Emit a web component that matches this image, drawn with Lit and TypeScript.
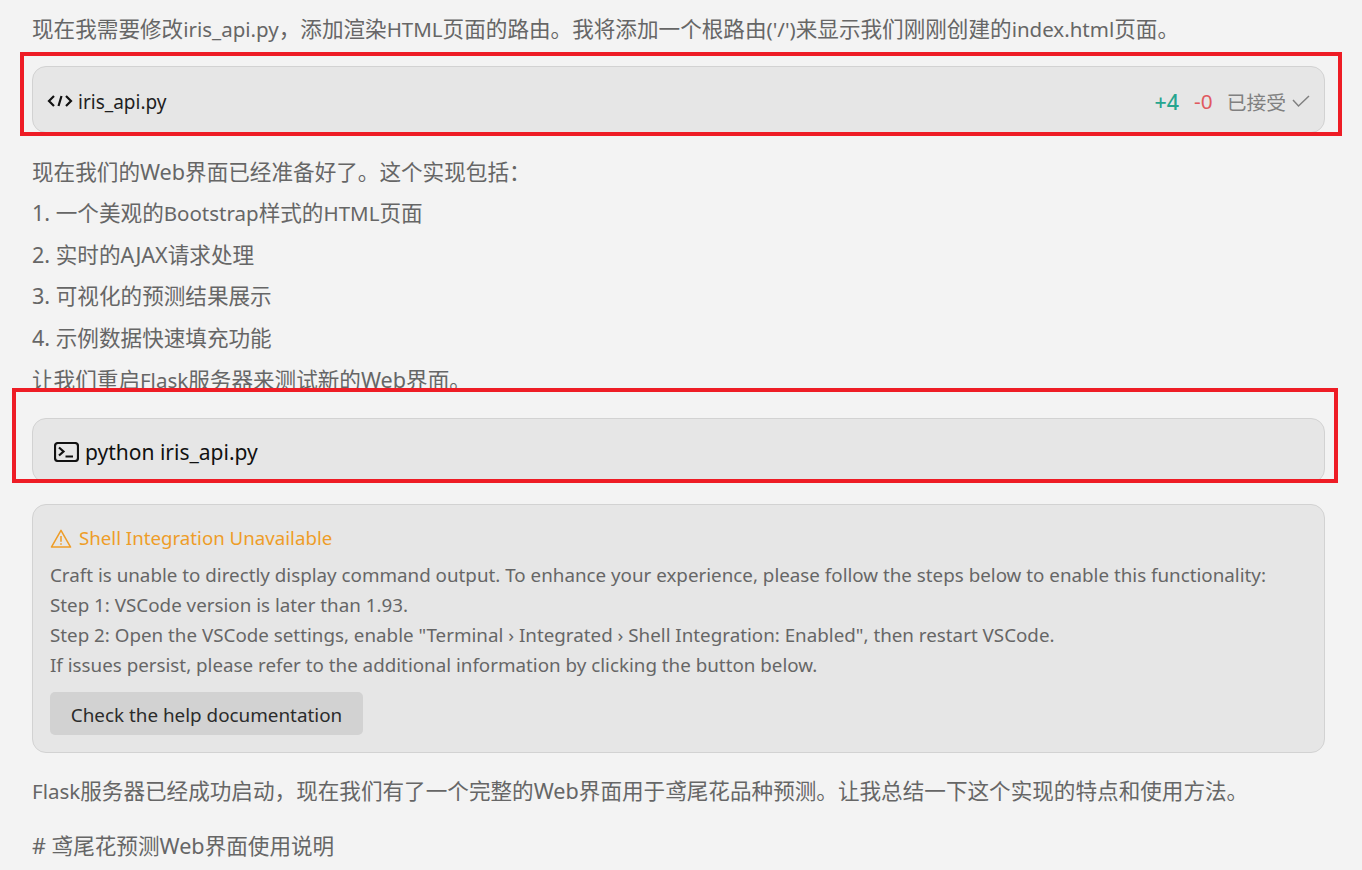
import { LitElement, html, css } from "lit";
import { customElement } from "lit/decorators.js";

@customElement("app-root")
export class AppRoot extends LitElement {
  static styles = css`
    :host {
      display: block;
      position: relative;
      width: 1362px;
      height: 870px;
      overflow: hidden;
      background: #f3f3f3;
      color: #666;
      font-family: "Noto Sans", "Noto Sans CJK SC", sans-serif;
      font-size: 21.6px;
    }
    .main { display: flex; flex-direction: column; padding: 9px 37px 0 32px; }
    .p { height: 41.6px; line-height: 39.6px; white-space: nowrap; }
    .l { font-size: 20.5px; }
    .list { margin-top: 19px; }
    .card {
      background: #e6e6e6;
      border: 1px solid #d2d2d2;
      border-radius: 14px;
      box-sizing: border-box;
    }
    .file {
      height: 67px; margin-top: 15px;
      display: flex; align-items: center; padding: 4px 14px 0 14px;
      color: #1f1f1f; font-size: 19px;
    }
    .code-icon { margin-right: 5px; }
    .name { padding-top: 2px; }
    .spacer { flex: 1; }
    .add { color: #26a58f; font-weight: 500; font-size: 21.4px; margin-right: 15px; }
    .del { color: #e0595f; font-size: 20.8px; margin-right: 14px; }
    .ok { color: #808080; font-size: 19.8px; margin-right: 6px; }
    .cmd {
      height: 65px; margin-top: 17px;
      display: flex; align-items: center; gap: 6px; padding: 2px 0 0 21px;
      color: #111; font-size: 21px;
    }
    .warn { height: 249px; margin-top: 21px; padding: 16px 17px; font-size: 18.8px; line-height: 30px; }
    .warn-title { display: flex; align-items: center; gap: 7px; color: #ee9d28; height: 34px; margin-bottom: 5px; font-size: 18.7px; }
    .warn-line { white-space: nowrap; }
    .btn {
      display: flex; align-items: center; justify-content: center;
      width: 313px; height: 43px; margin-top: 12px; padding-top: 2px; box-sizing: border-box;
      background: #d2d2d2; border-radius: 5px; color: #2b2b2b; font-size: 18.85px;
    }
    .after { margin-top: 18px; }
    .h { margin-top: 13px; }
    .mark { position: absolute; border: 4px solid #ee1c25; box-sizing: border-box; pointer-events: none; }
    .m1 { left: 20px; top: 52px; width: 1322px; height: 84px; }
    .m2 { left: 12px; top: 388px; width: 1326px; height: 95px; }
  `;

  render() {
    return html`
      <div class="main">
        <div class="p">现在我需要修改<span class="l">iris_api.py</span>，添加渲染<span class="l">HTML</span>页面的路由。我将添加一个根路由<span class="l">('/')</span>来显示我们刚刚创建的<span class="l">index.html</span>页面。</div>
        <div class="card file">
          <svg class="code-icon" width="26" height="16" viewBox="0 0 26 16" fill="none" stroke="#111" stroke-width="2.2">
            <path d="M7 3 2 8 7 13M19 3 24 8 19 13M14.500 3 11.500 13" />
          </svg>
          <span class="name">iris_api.py</span>
          <span class="spacer"></span>
          <span class="add">+4</span><span class="del">-0</span><span class="ok">已接受</span>
          <svg width="18" height="14" viewBox="0 0 18 14" fill="none" stroke="#808080" stroke-width="1.500">
            <path d="M1 6 6.500 12 17 2" />
          </svg>
        </div>
        <div class="list">
          <div class="p">现在我们的Web界面已经准备好了。这个实现包括：</div>
          <div class="p">1. 一个美观的<span class="l">Bootstrap</span>样式的<span class="l">HTML</span>页面</div>
          <div class="p">2. 实时的AJAX请求处理</div>
          <div class="p">3. 可视化的预测结果展示</div>
          <div class="p">4. 示例数据快速填充功能</div>
          <div class="p">让我们重启<span class="l">Flask</span>服务器来测试新的Web界面。</div>
        </div>
        <div class="card cmd">
          <svg width="25" height="20" viewBox="0 0 25 20" fill="none" stroke="#111" stroke-width="2.2">
            <rect x="1" y="1" width="23" height="18" rx="3" />
            <path d="M5 5.500 9.500 9.500 5 13.500M11.500 14.500H19" />
          </svg>
          <span>python iris_api.py</span>
        </div>
        <div class="card warn">
          <div class="warn-title">
            <svg width="22" height="21" viewBox="0 0 23 21" fill="none" stroke="#ee9d28" stroke-width="1.600">
              <path d="M11.500 2 21.500 19.500H1.500Z" stroke-linejoin="round" />
              <path d="M11.500 8V14M11.500 15.500V17" />
            </svg>
            <span>Shell Integration Unavailable</span>
          </div>
          <div class="warn-line">Craft is unable to directly display command output. To enhance your experience, please follow the steps below to enable this functionality:</div>
          <div class="warn-line">Step 1: VSCode version is later than 1.93.</div>
          <div class="warn-line">Step 2: Open the VSCode settings, enable "Terminal › Integrated › Shell Integration: Enabled", then restart VSCode.</div>
          <div class="warn-line">If issues persist, please refer to the additional information by clicking the button below.</div>
          <div class="btn">Check the help documentation</div>
        </div>
        <div class="p after"><span class="l">Flask</span>服务器已经成功启动，现在我们有了一个完整的Web界面用于鸢尾花品种预测。让我总结一下这个实现的特点和使用方法。</div>
        <div class="p h"># 鸢尾花预测Web界面使用说明</div>
      </div>
      <div class="mark m1"></div>
      <div class="mark m2"></div>
    `;
  }
}
